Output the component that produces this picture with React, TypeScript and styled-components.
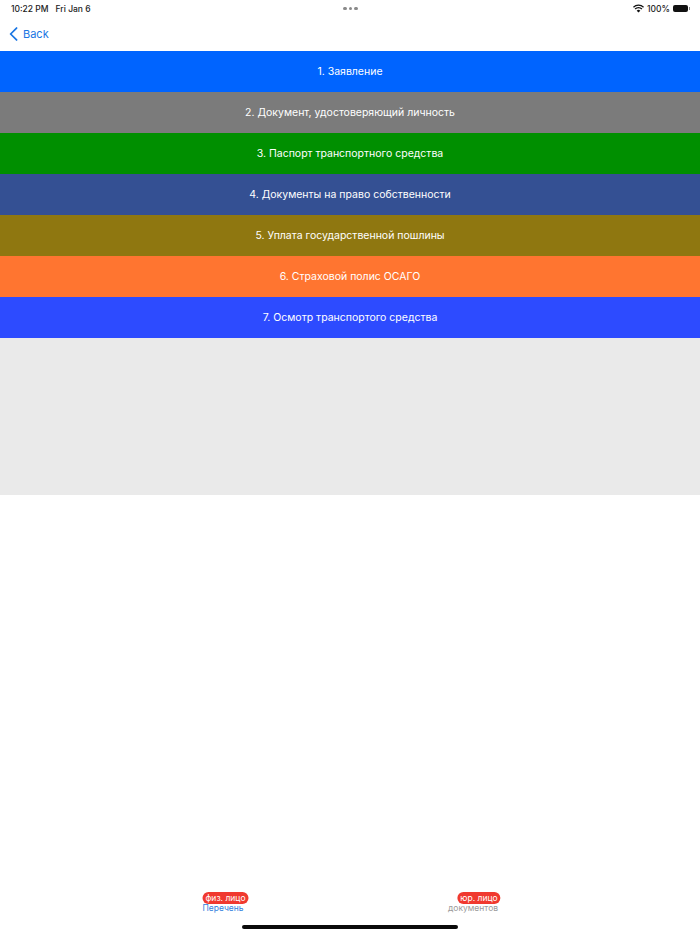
import { FC } from "react";
import styled, { createGlobalStyle } from "styled-components";

const steps = [
  { text: "1. Заявление", color: "#0064ff" },
  { text: "2. Документ, удостоверяющий личность", color: "#7b7b7b" },
  { text: "3. Паспорт транспортного средства", color: "#008f00" },
  { text: "4. Документы на право собственности", color: "#345093" },
  { text: "5. Уплата государственной пошлины", color: "#8f7710" },
  { text: "6. Страховой полис ОСАГО", color: "#ff7530" },
  { text: "7. Осмотр транспортого средства", color: "#2d4bff" },
];

const App: FC = () => (
  <Page>
    <GlobalStyle />
    <StatusBar>
      <StatusSide>
        <span>10:22 PM</span>
        <span>Fri Jan 6</span>
      </StatusSide>
      <Dots>
        <Dot />
        <Dot />
        <Dot />
      </Dots>
      <StatusRight>
        <svg width="11" height="9" viewBox="0 0 22 17">
          <path d="M11 16.5 7.4 12.8a5 5 0 0 1 7.2 0L11 16.5Z" fill="#111" />
          <path d="M5.2 10.6 3.2 8.5a11 11 0 0 1 15.6 0l-2 2.1a8 8 0 0 0-11.6 0Z" fill="#111" />
          <path d="M1.8 7 0 5a15.6 15.6 0 0 1 22 0l-1.8 2A13 13 0 0 0 1.8 7Z" fill="#111" />
        </svg>
        <span>100%</span>
        <Battery />
      </StatusRight>
    </StatusBar>
    <NavBar>
      <BackButton>
        <svg width="9" height="14" viewBox="0 0 10 16">
          <path d="M8.5 1.2 1.7 8l6.8 6.8" fill="none" stroke="#1a76e3" strokeWidth="2" strokeLinecap="round" strokeLinejoin="round" />
        </svg>
        <span>Back</span>
      </BackButton>
    </NavBar>
    <StepList>
      {steps.map((step) => (
        <StepRow key={step.text} $color={step.color}>
          {step.text}
        </StepRow>
      ))}
    </StepList>
    <EmptyPanel />
    <Spacer />
    <TabBar>
      <TabItem>
        <TabBadge $shift={2.5}>физ. лицо</TabBadge>
        <TabLabel $active>Перечень</TabLabel>
      </TabItem>
      <TabItem>
        <TabBadge $shift={6}>юр. лицо</TabBadge>
        <TabLabel>документов</TabLabel>
      </TabItem>
    </TabBar>
    <HomeRow>
      <HomeIndicator />
    </HomeRow>
  </Page>
);

const GlobalStyle = createGlobalStyle`
  html, body {
    margin: 0;
    padding: 0;
    background: white;
  }
  body {
    font-family: "Inter", "Liberation Sans", sans-serif;
  }
`;

const Page = styled.div`
  display: flex;
  flex-direction: column;
  width: 700px;
  height: 934px;
  overflow: hidden;
  background-color: white;
`;

const StatusBar = styled.div`
  display: grid;
  grid-template-columns: 1fr auto 1fr;
  align-items: center;
  height: 17px;
  padding: 0 10px 0 11px;
  font-size: 8.5px;
  color: #222;
`;

const StatusSide = styled.div`
  display: flex;
  gap: 7px;
  font-weight: 500;
`;

const StatusRight = styled.div`
  display: flex;
  justify-content: flex-end;
  align-items: center;
  gap: 3px;
  font-weight: 500;
`;

const Dots = styled.div`
  display: flex;
  gap: 2px;
`;

const Dot = styled.div`
  width: 3.5px;
  height: 3.5px;
  border-radius: 50%;
  background-color: #8a8a8a;
`;

const Battery = styled.div`
  position: relative;
  width: 15px;
  height: 7px;
  margin-right: 2px;
  border-radius: 2px;
  background-color: #111;

  &::after {
    content: "";
    position: absolute;
    top: 2px;
    right: -2px;
    width: 1px;
    height: 3px;
    background-color: #888;
  }
`;

const NavBar = styled.div`
  display: flex;
  align-items: center;
  height: 34px;
  padding-left: 9px;
`;

const BackButton = styled.div`
  display: flex;
  align-items: center;
  gap: 5px;
  font-size: 11px;
  color: #1a76e3;
`;

const StepList = styled.div`
  display: flex;
  flex-direction: column;
`;

const StepRow = styled.div<{ $color: string }>`
  display: flex;
  justify-content: center;
  align-items: center;
  height: 41px;
  padding-bottom: 1px;
  box-sizing: border-box;
  font-size: 10.5px;
  color: white;
  background-color: ${(props) => props.$color};
`;

const EmptyPanel = styled.div`
  height: 157px;
  background-color: #eaeaea;
`;

const Spacer = styled.div`
  flex: 1;
`;

const TabBar = styled.div`
  display: flex;
  justify-content: center;
  height: 29px;
  padding-right: 4px;
`;

const TabItem = styled.div`
  position: relative;
  display: flex;
  flex-direction: column;
  align-items: center;
  width: 250px;
  padding-top: 11px;
  box-sizing: border-box;
`;

const TabBadge = styled.div<{ $shift: number }>`
  position: absolute;
  top: 0;
  left: 50%;
  transform: translateX(calc(-50% + ${(props) => props.$shift}px));
  padding: 0 3px;
  border-radius: 7px;
  font-size: 8.5px;
  line-height: 12px;
  white-space: nowrap;
  color: white;
  background-color: #f0392f;
`;

const TabLabel = styled.div<{ $active?: boolean }>`
  font-size: 8.5px;
  line-height: 11px;
  color: ${(props) => (props.$active ? "#2f80dd" : "#9a9a9a")};
`;

const HomeRow = styled.div`
  display: flex;
  justify-content: center;
  height: 13px;
`;

const HomeIndicator = styled.div`
  width: 216px;
  height: 4px;
  margin-top: 4px;
  border-radius: 2px;
  background-color: #0a0a0a;
`;

export default App;
